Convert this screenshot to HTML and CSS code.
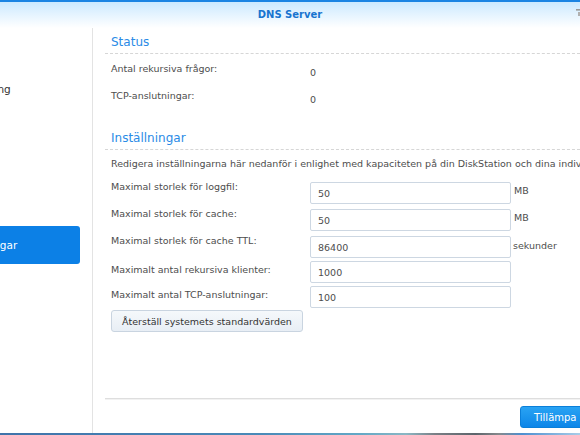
FILE: index.html
```html
<!DOCTYPE html>
<html lang="sv">
<head>
<meta charset="utf-8">
<title>DNS Server</title>
<link rel="stylesheet" href="styles.css">
</head>
<body>
<div class="app">
  <header class="titlebar">
    <div class="title">DNS Server</div>
    <span class="help"><svg width="8" height="10" viewBox="0 0 8 10"><rect x="0" y="0" width="8" height="1.6" fill="#9a9a9a"/><rect x="2" y="3" width="2" height="4" fill="#b0b0b0"/></svg></span>
  </header>
  <div class="body">
    <nav class="sidebar">
      <ul class="nav">
        <li class="nav-item"><span class="nav-text">Zoner</span></li>
        <li class="nav-item"><span class="nav-text">Upplösning</span></li>
        <li class="nav-item"><span class="nav-text">Logg</span></li>
        <li class="nav-item"><span class="nav-text">Nycklar</span></li>
        <li class="nav-item"><span class="nav-text">Vyer</span></li>
        <li class="nav-item active"><span class="nav-text">Inställningar</span></li>
      </ul>
    </nav>
    <main class="main">
      <div class="content">
        <section class="section">
          <h2 class="section-title">Status</h2>
          <div class="stat-row"><span class="label">Antal rekursiva frågor:</span><span class="value">0</span></div>
          <div class="stat-row"><span class="label">TCP-anslutningar:</span><span class="value">0</span></div>
        </section>
        <section class="section section-settings">
          <h2 class="section-title">Inställningar</h2>
          <p class="desc">Redigera inställningarna här nedanför i enlighet med kapaciteten på din DiskStation och dina individuella behov.</p>
          <div class="form-row unit-row"><span class="label">Maximal storlek för loggfil:</span><input class="field" type="text" value="50"><span class="unit">MB</span></div>
          <div class="form-row unit-row"><span class="label">Maximal storlek för cache:</span><input class="field" type="text" value="50"><span class="unit">MB</span></div>
          <div class="form-row unit-row"><span class="label">Maximal storlek för cache TTL:</span><input class="field" type="text" value="86400"><span class="unit unit-low">sekunder</span></div>
          <div class="form-row plain-row"><span class="label">Maximalt antal rekursiva klienter:</span><input class="field" type="text" value="1000"></div>
          <div class="form-row plain-row last"><span class="label">Maximalt antal TCP-anslutningar:</span><input class="field" type="text" value="100"></div>
          <button class="btn" type="button">Återställ systemets standardvärden</button>
        </section>
      </div>
      <footer class="footer">
        <button class="btn-primary" type="button">Tillämpa</button>
      </footer>
    </main>
  </div>
  <div class="desktop-strip"></div>
</div>
</body>
</html>
```

FILE: styles.css
```css
* { box-sizing: border-box; }
html, body { margin: 0; padding: 0; }
body {
  width: 580px;
  height: 435px;
  overflow: hidden;
  background: #ffffff;
  font-family: "DejaVu Sans", Verdana, sans-serif;
  font-size: 9.5px;
  color: #4d4d4d;
}
.app {
  width: 580px;
  height: 435px;
  display: flex;
  flex-direction: column;
  overflow: hidden;
}
.titlebar {
  flex: 0 0 28px;
  border-top: 2px solid #1b84e3;
  background: linear-gradient(180deg, #cbe9ff 0%, #e3f3ff 45%, #ffffff 100%);
  display: grid;
  grid-template-columns: 1fr auto 1fr;
  align-items: center;
  overflow: hidden;
}
.title {
  grid-column: 2;
  font-weight: bold;
  font-size: 10px;
  color: #1874cf;
  line-height: 14px;
}
.help {
  grid-column: 3;
  justify-self: end;
  margin-right: -4px;
  margin-top: -2px;
  display: flex;
}
.body {
  flex: 1 1 auto;
  display: flex;
  min-height: 0;
}
.sidebar {
  flex: 0 0 93px;
  border-right: 1px solid #e3e3e3;
  overflow: hidden;
  padding-top: 3px;
}
.nav {
  list-style: none;
  margin: 0;
  padding: 0;
}
.nav-item {
  width: 80px;
  height: 38px;
  margin-bottom: 1px;
  display: flex;
  align-items: center;
  font-size: 10.5px;
  color: #333333;
  border-radius: 0 3px 3px 0;
  white-space: nowrap;
}
.nav-text { margin-left: -48px; }
.nav-item.active {
  background: #0c80e6;
  color: #ffffff;
}
.main {
  flex: 1 1 auto;
  display: flex;
  flex-direction: column;
  min-width: 0;
}
.content {
  flex: 1 1 auto;
  padding: 6px 0 0 12px;
}
.section-title {
  margin: 0;
  padding: 0 6px 3px;
  font-size: 12px;
  line-height: 16px;
  font-weight: normal;
  color: #2a8be6;
  border-bottom: 1px dashed #d6d6d6;
}
.stat-row {
  height: 27px;
  display: flex;
  padding-left: 6px;
  line-height: 14px;
}
.section .section-title + .stat-row { margin-top: 8px; }
.stat-row .value { padding-top: 4px; }
.label {
  flex: 0 0 199px;
  line-height: 14px;
  white-space: nowrap;
}
.section-settings { margin-top: 14px; }
.desc {
  margin: 7px 0 9px;
  padding-left: 6px;
  line-height: 14px;
  white-space: nowrap;
}
.form-row {
  display: flex;
  align-items: flex-start;
  padding-left: 6px;
}
.unit-row { height: 27px; }
.unit-row .field { margin-top: 2px; }
.plain-row { height: 25px; }
.plain-row.last { height: 24px; }
.plain-row .label { padding-top: 2px; }
.field {
  flex: 0 0 201px;
  width: 201px;
  height: 22px;
  border: 1px solid #cdd7e2;
  border-radius: 2px;
  padding: 1px 7px 0;
  font-family: inherit;
  font-size: 9.5px;
  color: #4d4d4d;
  background: #ffffff;
  outline: none;
}
.unit {
  margin-left: 3px;
  padding-top: 4px;
  line-height: 14px;
}
.unit-low { padding-top: 5px; margin-left: 2px; }
.btn {
  margin-left: 6px;
  height: 22px;
  padding: 0 10px;
  font-family: inherit;
  font-size: 9.5px;
  color: #333333;
  background: linear-gradient(180deg, #f5f8fb 0%, #e8eef5 100%);
  border: 1px solid #c9d4e0;
  border-radius: 3px;
}
.footer {
  flex: 0 0 35px;
  margin-left: 12px;
  border-top: 1px solid #dedede;
  box-shadow: 0 1px 0 #f2f2f2 inset;
  padding-top: 7px;
  display: flex;
  justify-content: flex-end;
  overflow: hidden;
}
.btn-primary {
  margin-right: -14px;
  height: 22px;
  width: 74px;
  padding: 0 0 0 13px;
  text-align: left;
  font-family: inherit;
  font-size: 10px;
  color: #ffffff;
  background: linear-gradient(180deg, #29a3f3 0%, #0d86e8 100%);
  border: 1px solid #0b7fd9;
  border-radius: 3px;
}
.desktop-strip {
  flex: 0 0 2px;
  background: linear-gradient(90deg, #3f73aa 0%, #4a8ab8 45%, #63a8c6 62%, #8bb7c4 70%, #7a7f85 75%, #5c646b 82%, #86898c 86%, #4d8fd0 90%, #a9cde8 100%);
}
```
